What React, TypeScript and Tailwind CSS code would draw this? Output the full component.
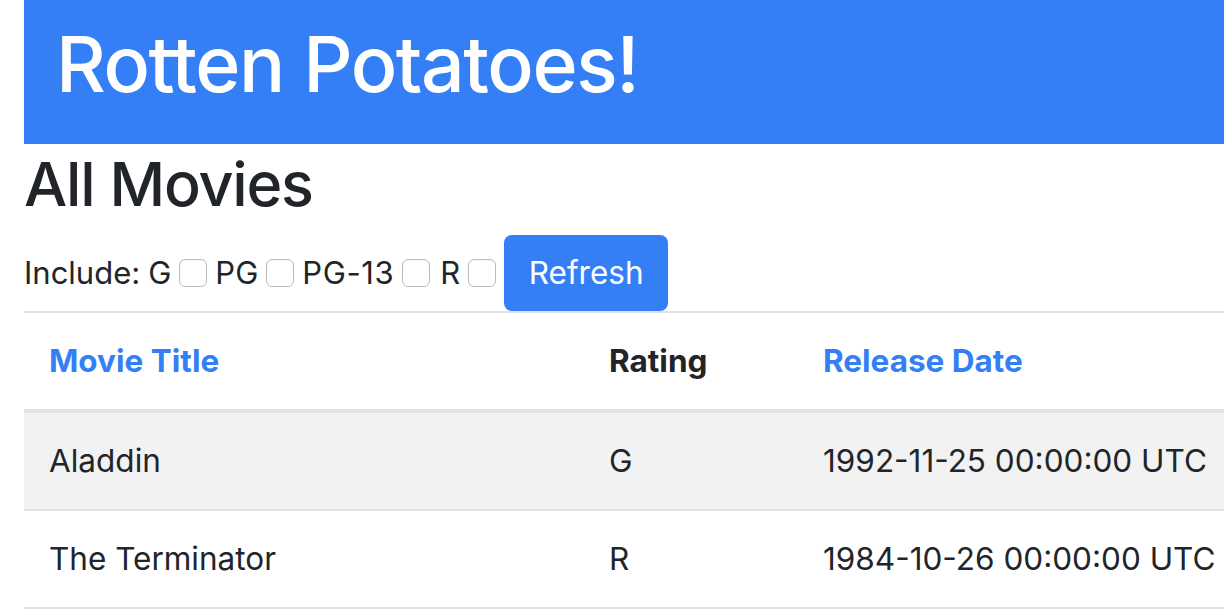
import React from 'react'

const font = { fontFamily: 'Inter, "Noto Sans", sans-serif' }

const movies = [
  { title: 'Aladdin', rating: 'G', date: '1992-11-25 00:00:00 UTC' },
  { title: 'The Terminator', rating: 'R', date: '1984-10-26 00:00:00 UTC' },
]

function Box() {
  return <span className="inline-block w-[28px] h-[28px] rounded-[6px] border border-[#bdbdbd] bg-white mx-[8px] shadow-[inset_0_1px_1px_rgba(0,0,0,0.05)]" />
}

export default function App() {
  return (
    <div className="w-[1224px] h-[610px] overflow-hidden bg-white text-[#212529]" style={font}>
      <div className="pl-[24px] w-[1260px]">
        {/* Banner */}
        <div className="h-[144px] bg-[#347ff5] flex items-center pl-[32px] pb-[16px]">
          <h1 className="text-[77px] text-white leading-none font-medium tracking-[-1.4px]">Rotten Potatoes!</h1>
        </div>

        <h2 className="text-[61px] leading-none font-medium mt-[10px] tracking-[-1.2px]">All Movies</h2>

        {/* Filters */}
        <form className="flex items-center mt-[20px] text-[31px]">
          <span>Include:</span>
          <span className="ml-[8px]">G</span><Box />
          <span>PG</span><Box />
          <span className="tracking-[0.6px]">PG-13</span><Box />
          <span className="ml-[2px]">R</span><Box />
          <button type="button" className="w-[164px] h-[76px] rounded-[8px] bg-[#347ff5] text-white text-[31.5px] pb-[1px]">Refresh</button>
        </form>

        {/* Table */}
        <div className="border-t-2 border-[#dee2e6] text-[31.5px]">
          <div className="grid grid-cols-[561px_214px_1fr] h-[100px] items-center border-b-4 border-[#dee2e6] font-bold">
            <a href="#" className="pl-[25px] text-[#347ff5]">Movie Title</a>
            <span className="pl-[24px]">Rating</span>
            <a href="#" className="pl-[24px] text-[#347ff5]">Release Date</a>
          </div>
          {movies.map((m, i) => (
            <div key={m.title} className={`grid grid-cols-[561px_214px_1fr] h-[98px] items-center border-b-2 border-[#dee2e6] ${i % 2 === 0 ? 'bg-[#f2f2f2]' : 'bg-white'}`}>
              <span className="pl-[25px]">{m.title}</span>
              <span className="pl-[24px]">{m.rating}</span>
              <span className="pl-[24px]">{m.date}</span>
            </div>
          ))}
        </div>
      </div>
    </div>
  )
}
